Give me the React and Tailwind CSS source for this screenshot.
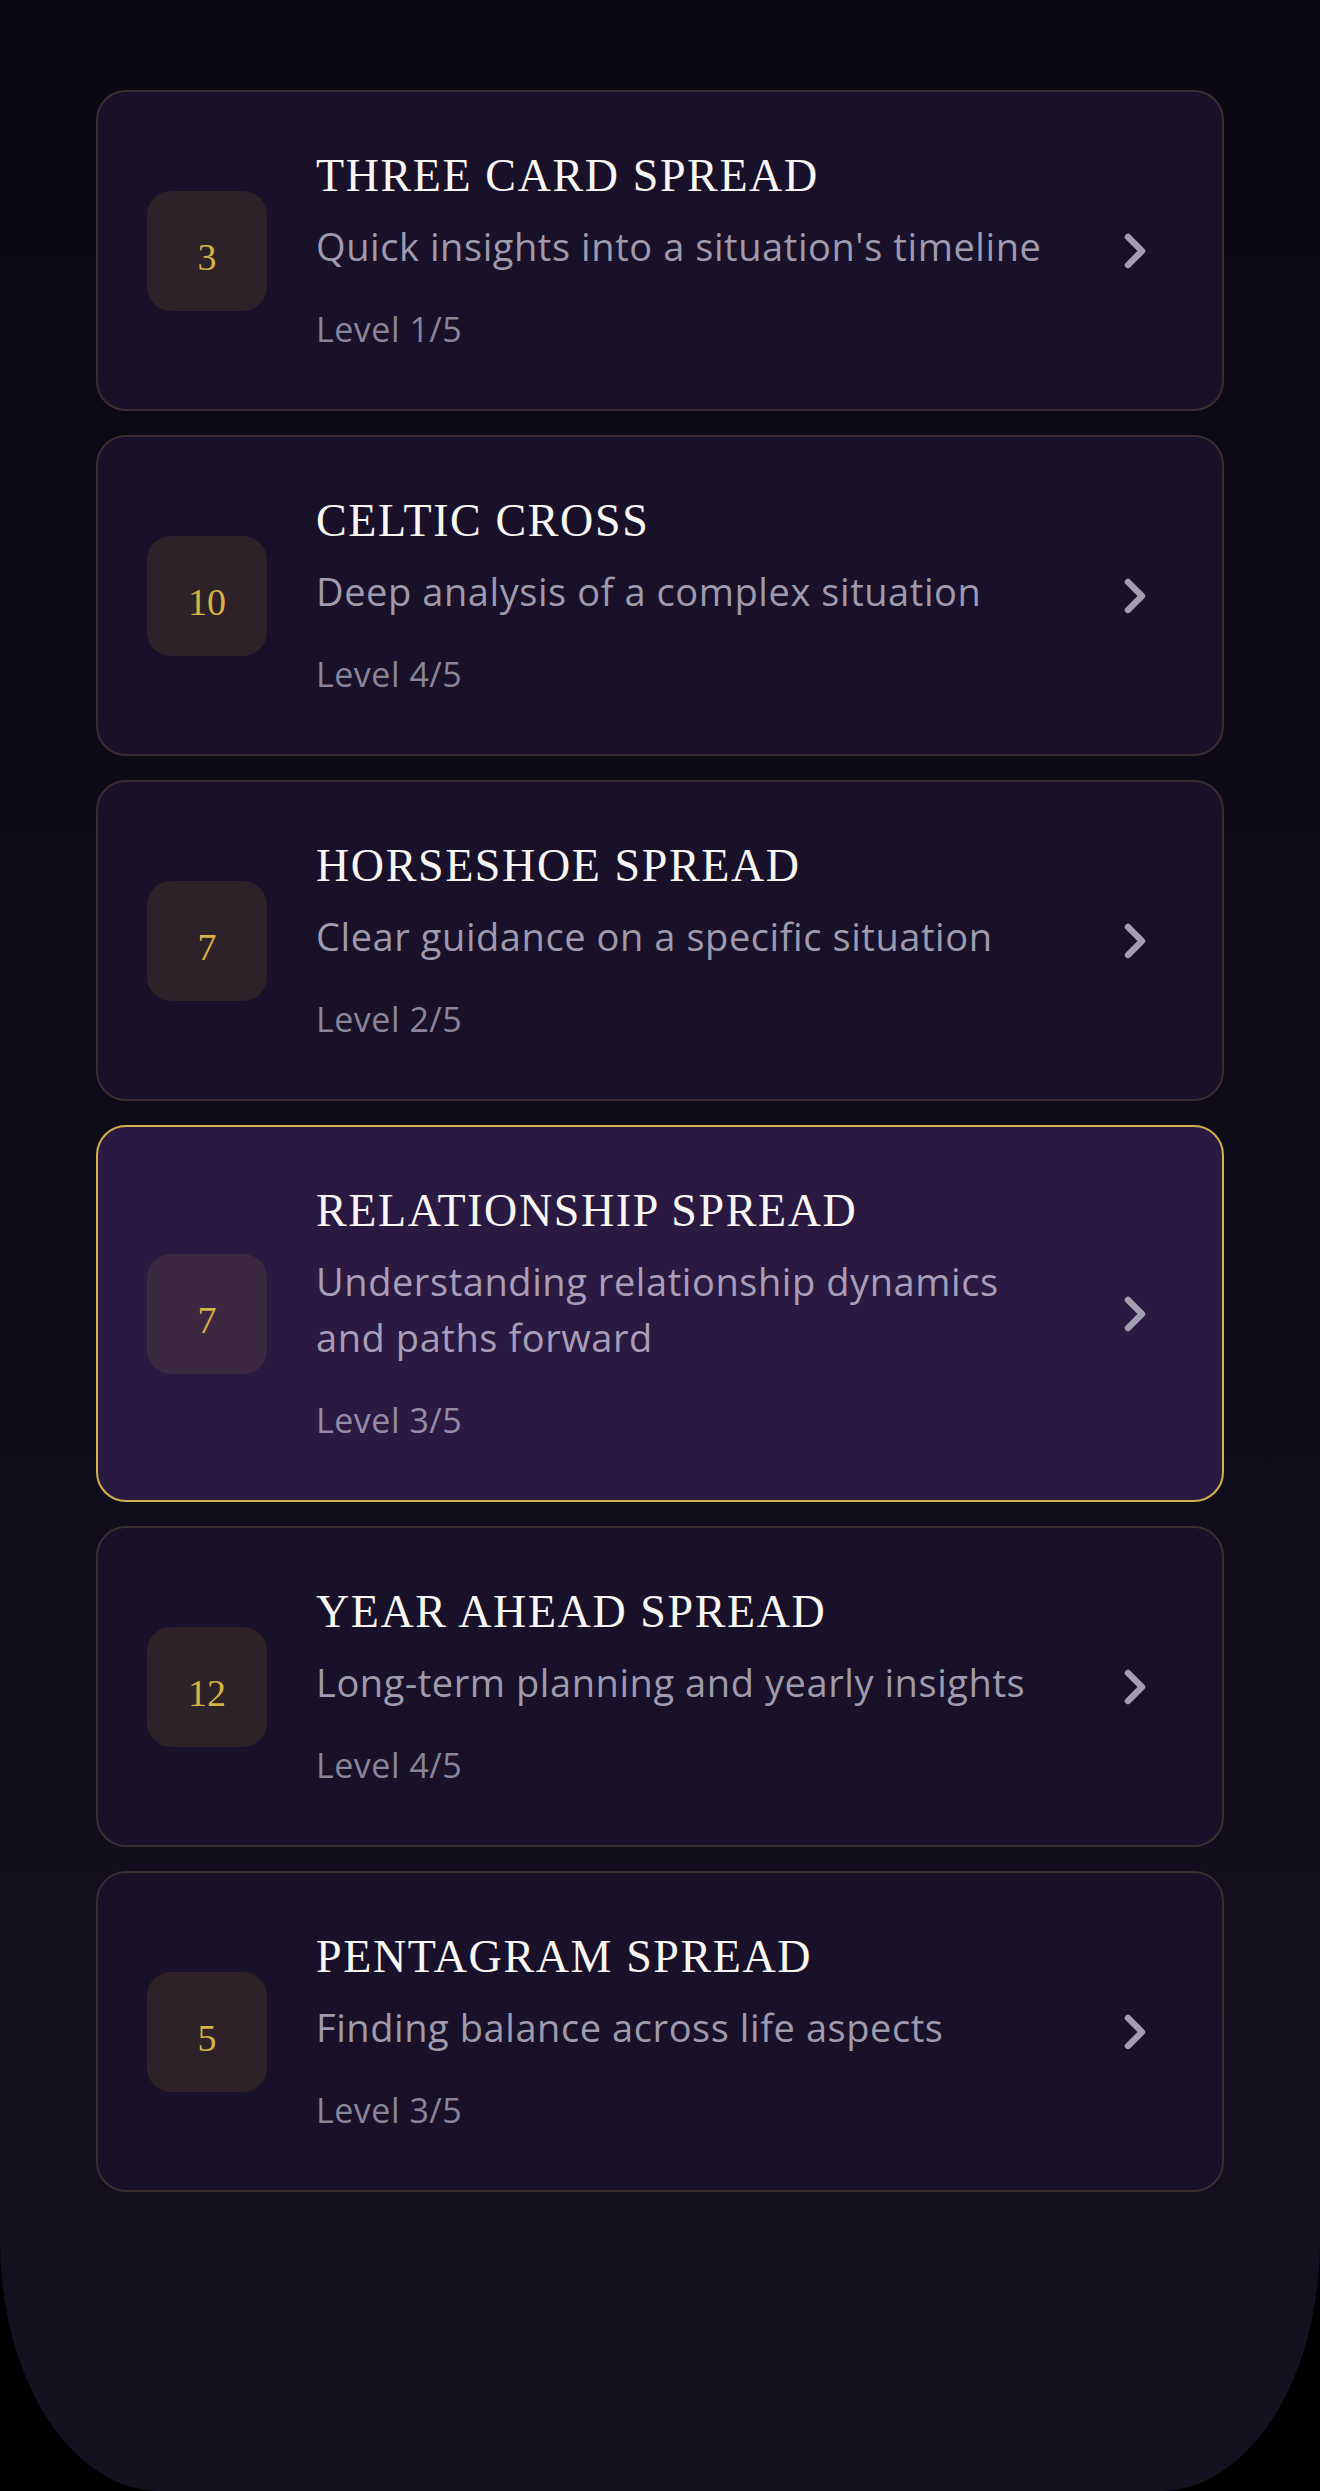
import { ChevronRight } from 'lucide-react';

const SPREADS = [
    { count: '3', name: 'Three Card Spread', description: "Quick insights into a situation's timeline", level: 1 },
    { count: '10', name: 'Celtic Cross', description: 'Deep analysis of a complex situation', level: 4 },
    { count: '7', name: 'Horseshoe Spread', description: 'Clear guidance on a specific situation', level: 2 },
    { count: '7', name: 'Relationship Spread', description: 'Understanding relationship dynamics and paths forward', level: 3, selected: true },
    { count: '12', name: 'Year Ahead Spread', description: 'Long-term planning and yearly insights', level: 4 },
    { count: '5', name: 'Pentagram Spread', description: 'Finding balance across life aspects', level: 3 },
];

const SpreadCard = ({ spread }) => {
    const selected = spread.selected;

    return (
        <div
            className={`flex items-center rounded-[30px] border-2 pl-[49px] pr-[59px] pt-[56px] pb-[56px] ${
                selected
                    ? 'border-[#d2b04c] bg-[#2a1a42]'
                    : 'border-[#3a2e30] bg-[#181129]'
            }`}
        >
            {/* Card count badge */}
            <div
                className={`flex h-[120px] w-[120px] shrink-0 items-center justify-center rounded-[24px] ${
                    selected ? 'bg-[#3c2840]' : 'bg-[#2d2228]'
                }`}
            >
                <span className="translate-y-[6px] font-['Liberation_Serif',serif] text-[38px] leading-none text-[#d6b343]">
                    {spread.count}
                </span>
            </div>

            {/* Text */}
            <div className="ml-[49px] w-[736px] shrink-0">
                <h3 className="font-['Liberation_Serif',serif] text-[46px] leading-[56px] tracking-[0.035em] text-[#f8f6f2] uppercase">
                    {spread.name}
                </h3>
                <p
                    className={`mt-[14px] font-['Open_Sans',sans-serif] text-[38px] leading-[56px] tracking-[0.015em] ${
                        selected ? 'text-[#a89eb8]' : 'text-[#9f9aac]'
                    }`}
                >
                    {spread.description}
                </p>
                <p
                    className={`mt-[31px] font-['Open_Sans',sans-serif] text-[34px] leading-[48px] tracking-[0.015em] ${
                        selected ? 'text-[#958ba6]' : 'text-[#8a8598]'
                    }`}
                >
                    Level {spread.level}/5
                </p>
            </div>

            <div className="ml-auto flex items-center">
                <ChevronRight size={56} strokeWidth={2.75} className="text-[#a29eb0]" />
            </div>
        </div>
    );
};

export default function App() {
    return (
        <div className="min-h-[2491px] bg-black">
            <div className="flex h-[2491px] flex-col gap-[24px] rounded-b-[160px_250px] bg-gradient-to-b from-[#0a0911] via-[#0f0c19] to-[#151121] px-[96px] pt-[90px]">
                {SPREADS.map((spread) => (
                    <SpreadCard key={spread.name} spread={spread} />
                ))}
            </div>
        </div>
    );
}
